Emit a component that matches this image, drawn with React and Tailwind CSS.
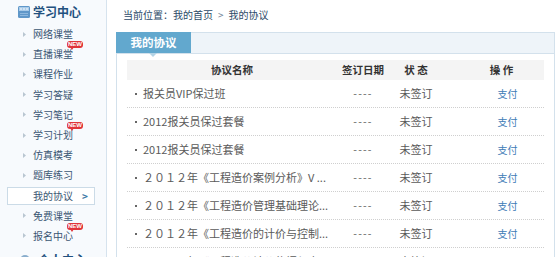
import React from "react";

const menu = [
  { t: "网络课堂" },
  { t: "直播课堂", isNew: true },
  { t: "课程作业" },
  { t: "学习答疑" },
  { t: "学习笔记" },
  { t: "学习计划", isNew: true },
  { t: "仿真模考" },
  { t: "题库练习" },
  { t: "我的协议", active: true },
  { t: "免费课堂" },
  { t: "报名中心", isNew: true },
];

const rows = [
  "报关员VIP保过班",
  "2012报关员保过套餐",
  "2012报关员保过套餐",
  "２０１２年《工程造价案例分析》V ...",
  "２０１２年《工程造价管理基础理论...",
  "２０１２年《工程造价的计价与控制...",
  "２０１２年《工程造价计价依据与定...",
];

function NewBadge() {
  return (
    <span className="absolute left-[67px] top-[-3px] w-[16px] h-[7px] rounded-[3px] bg-[#e0343a] text-white text-[6px] font-bold leading-[7px] text-center font-['Liberation_Sans',sans-serif]">
      NEW
      <span className="absolute left-[3px] top-[6px] w-0 h-0 border-l-[2px] border-r-[2px] border-t-[3px] border-l-transparent border-r-transparent border-t-[#e0343a]" />
    </span>
  );
}

function Arrow() {
  return (
    <svg width="3" height="5" viewBox="0 0 3 5" className="mr-[7px]">
      <path d="M0 0 L3 2.5 L0 5 Z" fill="#b9c6d1" />
    </svg>
  );
}

export default function App() {
  return (
    <div className="flex w-[559px] h-[257px] overflow-hidden bg-white font-['Noto_Sans_CJK_SC',sans-serif]">
      {/* Sidebar */}
      <div className="w-[107px] shrink-0 border-r border-[#d6e3ee] bg-[#f7fafd] flex flex-col">
        <div className="h-[24px] shrink-0 flex items-center pl-[18px] gap-[3px]">
          <svg width="12" height="12" viewBox="0 0 12 12">
            <rect x="0" y="0" width="12" height="12" rx="1.5" fill="#5f97c9" />
            <rect x="1" y="1" width="10" height="4" fill="#a9cbe9" />
            <circle cx="3" cy="3" r="0.8" fill="#fff" />
            <circle cx="6" cy="3" r="0.8" fill="#fff" />
            <circle cx="9" cy="3" r="0.8" fill="#fff" />
            <rect x="2" y="7" width="8" height="1" fill="#8db8df" />
            <rect x="2" y="9" width="8" height="1" fill="#8db8df" />
          </svg>
          <span className="text-[12px] font-bold text-[#23517f] leading-none">学习中心</span>
        </div>
        {menu.map((m) =>
          m.active ? (
            <div key={m.t} className="h-[20.2px] shrink-0 flex items-center px-[7px]">
              <div className="h-[18px] w-[88px] border border-[#cbdbe7] bg-white flex items-center pl-[25px]">
                <span className="text-[10px] text-[#3a5673] leading-none">{m.t}</span>
                <span className="ml-[9px] text-[10px] font-bold text-[#3f7aa6] leading-none">&gt;</span>
              </div>
            </div>
          ) : (
            <div key={m.t} className="relative h-[20.2px] shrink-0 flex items-center pl-[23px]">
              <Arrow />
              <span className="text-[10px] text-[#3a5673] leading-none">{m.t}</span>
              {m.isNew && <NewBadge />}
            </div>
          )
        )}
        <div className="h-[24px] shrink-0 flex items-center pl-[20px] pt-[4px] gap-[8px]">
          <svg width="10" height="10" viewBox="0 0 10 10">
            <circle cx="5" cy="5" r="5" fill="#8aaecd" />
          </svg>
          <span className="text-[12px] font-bold text-[#23517f] leading-none">个人中心</span>
        </div>
      </div>

      {/* Main */}
      <div className="flex-1 pl-[9px] flex flex-col">
        <div className="h-[32px] shrink-0 flex items-center pl-[7px] pb-[4px] text-[10px] text-[#2c4a68]">
          <span>当前位置：我的首页</span>
          <span className="mx-[5px] text-[#6c8196]">&gt;</span>
          <span>我的协议</span>
        </div>
        <div className="w-[439px] border border-[#d3e1ec] bg-white flex-1">
          <div className="h-[21px] bg-[#eef4f9] border-b border-[#d3e1ec] flex">
            <div className="relative -ml-px -mt-px h-[21px] w-[75px] bg-[#62a8ce] flex items-center justify-center">
              <span className="text-[11.5px] font-bold text-white leading-none">我的协议</span>
              <span className="absolute left-[33px] top-[21px] w-0 h-0 border-l-[4px] border-r-[4px] border-t-[4px] border-l-transparent border-r-transparent border-t-[#b3d3e5]" />
            </div>
          </div>
          <div className="px-[10px] pt-[6px]">
            <div className="grid grid-cols-[210px_52px_54px_101px] h-[20px] items-center bg-[#f4f4f4] text-[10.5px] font-bold text-[#333]">
              <div className="text-center">协议名称</div>
              <div className="text-center">签订日期</div>
              <div className="text-center">状 态</div>
              <div className="text-center pl-[16px]">操 作</div>
            </div>
            {rows.map((r, i) => (
              <div
                key={i}
                className="grid grid-cols-[210px_52px_54px_101px] h-[28px] items-center border-b border-dotted border-[#cfcfcf] text-[11px] text-[#5a5a5a]"
              >
                <div className="flex items-center pl-[8px] whitespace-nowrap overflow-hidden">
                  <span className="w-[2px] h-[2px] bg-[#666] mr-[6px]" />
                  <span>{r}</span>
                </div>
                <div className="text-center font-['Liberation_Sans',sans-serif] text-[11px] tracking-[1.2px] text-[#777]">----</div>
                <div className="text-center">未签订</div>
                <div className="text-center pl-[28px] text-[10px] text-[#3d7bb6]">支付</div>
              </div>
            ))}
          </div>
        </div>
      </div>
    </div>
  );
}
